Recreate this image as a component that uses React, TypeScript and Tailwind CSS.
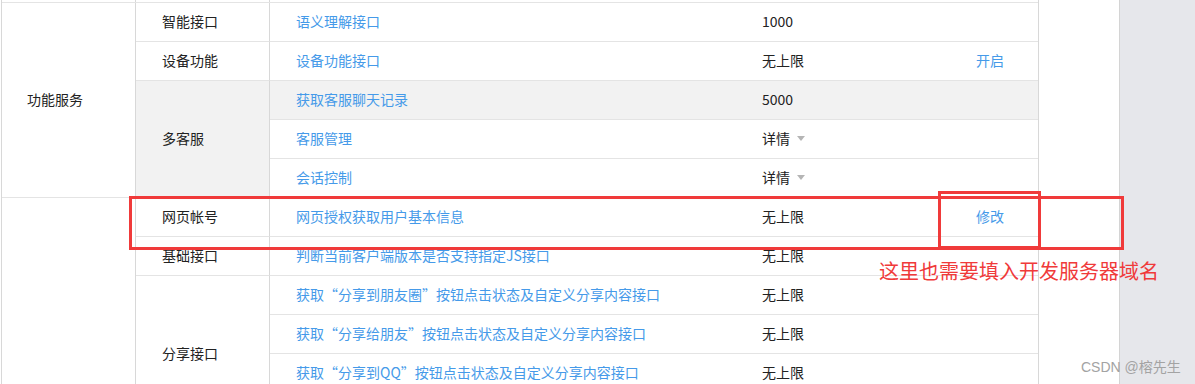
import React from "react";

interface Api {
  name: string;
  limit: string;
  action?: string;
  dropdown?: boolean;
  hover?: boolean;
}

interface SubGroup {
  label: string;
  gray?: boolean;
  apis: Api[];
}

interface Group {
  label: string;
  open?: boolean;
  subs: SubGroup[];
}

const groups: Group[] = [
  {
    label: "功能服务",
    subs: [
      { label: "智能接口", apis: [{ name: "语义理解接口", limit: "1000" }] },
      { label: "设备功能", apis: [{ name: "设备功能接口", limit: "无上限", action: "开启" }] },
      {
        label: "多客服",
        gray: true,
        apis: [
          { name: "获取客服聊天记录", limit: "5000", hover: true },
          { name: "客服管理", limit: "详情", dropdown: true },
          { name: "会话控制", limit: "详情", dropdown: true },
        ],
      },
    ],
  },
  {
    label: "",
    open: true,
    subs: [
      { label: "网页帐号", apis: [{ name: "网页授权获取用户基本信息", limit: "无上限", action: "修改" }] },
      { label: "基础接口", apis: [{ name: "判断当前客户端版本是否支持指定JS接口", limit: "无上限" }] },
      {
        label: "分享接口",
        apis: [
          { name: "获取“分享到朋友圈”按钮点击状态及自定义分享内容接口", limit: "无上限" },
          { name: "获取“分享给朋友”按钮点击状态及自定义分享内容接口", limit: "无上限" },
          { name: "获取“分享到QQ”按钮点击状态及自定义分享内容接口", limit: "无上限" },
          { name: "获取“分享到腾讯微博”按钮点击状态及自定义分享内容接口", limit: "无上限" },
        ],
      },
    ],
  },
];

function ApiRow({ api }: { api: Api }) {
  return (
    <div
      className={`flex h-[39px] border-b border-[#e4e4e4] pb-[2px] ${api.hover ? "bg-[#f2f2f2]" : ""}`}
    >
      <div className="flex w-[465px] items-center pl-[26px] text-[#459ae9]">{api.name}</div>
      <div className="flex w-[214px] items-center pl-[27px] text-[#222]">
        {api.limit}
        {api.dropdown && (
          <span className="ml-[7px] mt-[1px] h-0 w-0 border-x-[4px] border-t-[5px] border-x-transparent border-t-[#b5b5b5]" />
        )}
      </div>
      <div className="flex flex-1 items-center pl-[27px] text-[#459ae9]">{api.action}</div>
    </div>
  );
}

export default function App() {
  return (
    <div
      className="relative flex h-[384px] w-[1195px] overflow-hidden bg-white text-[14px] leading-none"
      style={{ fontFamily: '"Noto Sans CJK SC", "Liberation Sans", sans-serif' }}
    >
      {/* table */}
      <div className="w-[1119px] pl-[1px]">
        <div className="w-[1038px] border-x border-[#d8d8d8]">
          {/* tail of the row above */}
          <div className="flex h-[2px]">
            <div className="w-[134px] border-r border-[#d8d8d8]" />
            <div className="w-[134px] border-r border-[#d8d8d8]" />
          </div>
          <div className="border-t border-[#e4e4e4]">
            {groups.map((g, gi) => (
              <div key={gi} className="flex">
                <div
                  className={`flex w-[134px] shrink-0 items-center border-r border-[#d8d8d8] pb-[2px] pl-[25px] text-[#222] ${g.open ? "" : "border-b border-b-[#e4e4e4]"}`}
                >
                  {g.label}
                </div>
                <div className="flex-1">
                  {g.subs.map((s) => (
                    <div key={s.label} className="flex">
                      <div
                        className={`flex w-[134px] shrink-0 items-center border-r border-b border-r-[#d8d8d8] border-b-[#e4e4e4] pb-[2px] pl-[26px] text-[#222] ${s.gray ? "bg-[#f2f2f2]" : ""}`}
                      >
                        {s.label}
                      </div>
                      <div className="flex-1">
                        {s.apis.map((a) => (
                          <ApiRow key={a.name} api={a} />
                        ))}
                      </div>
                    </div>
                  ))}
                </div>
              </div>
            ))}
          </div>
        </div>
      </div>

      {/* right side panel */}
      <div className="flex-1 border-l border-[#d4d4d4] bg-[#e6e7eb]" />

      {/* annotations */}
      <div className="absolute left-[129px] top-[196px] h-[54px] w-[995px] border-[3px] border-[#f03a3a]" />
      <div className="absolute left-[938px] top-[191px] h-[58px] w-[103px] border-[3px] border-[#f03a3a]" />
      <div className="absolute left-[879px] top-[261px] text-[20px] text-[#f03a3a]">
        这里也需要填入开发服务器域名
      </div>
      <div
        className="absolute left-[1081px] top-[360px] text-[14px] text-[#a3a3a3]"
        style={{ fontFamily: '"Liberation Sans", "Noto Sans CJK SC", sans-serif' }}
      >
        CSDN @榕先生
      </div>
    </div>
  );
}
